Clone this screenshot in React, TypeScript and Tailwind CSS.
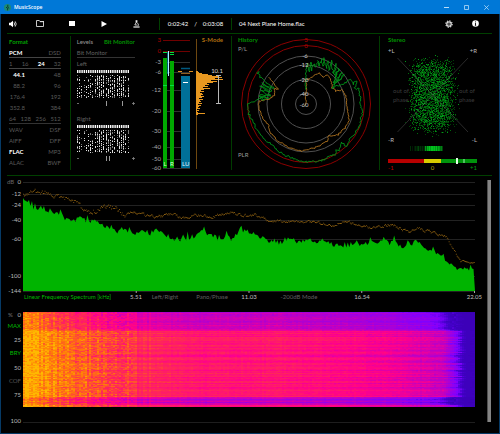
import React from 'react';

type Point = [number, number];

// small seeded generator so every render draws the same signal
const createRandom = (seed: number) => () => {
  seed = (seed * 1664525 + 1013904223) % 4294967296;
  return seed / 4294967296;
};

const valueAt = (points: Point[], x: number) => {
  for (let i = 1; i < points.length; i++) {
    const [x0, y0] = points[i - 1];
    const [x1, y1] = points[i];
    if (x <= x1) return y0 + ((y1 - y0) * (x - x0)) / (x1 - x0);
  }
  return points[points.length - 1][1];
};

const roughLine = (points: Point[], noise: number, seed: number) => {
  const random = createRandom(seed);
  const out: string[] = [];
  for (let i = 1; i < points.length; i++) {
    const [x0, y0] = points[i - 1];
    const [x1, y1] = points[i];
    const steps = Math.max(1, Math.round(Math.hypot(x1 - x0, y1 - y0) / 1.6));
    for (let s = 0; s < steps; s++) {
      const t = s / steps;
      out.push(`${(x0 + (x1 - x0) * t + (random() - 0.5) * noise).toFixed(1)},${(y0 + (y1 - y0) * t + (random() - 0.5) * noise).toFixed(1)}`);
    }
  }
  return out.join(' ');
};

/* ---------- Toolbar ---------- */

const Toolbar = () => (
  <div className="flex h-[19px] items-center pr-[7px] pl-2 text-white">
    <button aria-label="Volume" className="w-[15px]">
      <svg viewBox="0 0 8 8" className="h-2 w-2">
        <path d="M0 2.8h1.6L4 .8v6.4L1.6 5.2H0z" fill="currentColor" />
        <path d="M5 2.4q1.2 1.6 0 3.2M6.2 1.4q2 2.6 0 5.2" fill="none" stroke="currentColor" strokeWidth=".8" />
      </svg>
    </button>
    <button aria-label="Open file" className="flex w-8 justify-center">
      <svg viewBox="0 0 8 7" className="h-[7px] w-2">
        <path d="M.5 6.5v-6h2.8l.8 1.2h3.4v4.8z" fill="none" stroke="#ddd" strokeWidth=".9" />
        <path d="M4 1.5h4" stroke="#ddd" />
      </svg>
    </button>
    <button aria-label="Stop" className="flex w-8 justify-center">
      <span className="h-[5px] w-[6px] bg-white" />
    </button>
    <button aria-label="Play" className="flex w-8 justify-center">
      <svg viewBox="0 0 6 6" className="h-1.5 w-1.5">
        <path d="M.5 0 6 3 .5 6z" fill="currentColor" />
      </svg>
    </button>
    <button aria-label="Analyse" className="flex w-8 justify-center">
      <svg viewBox="0 0 7 8" className="h-2 w-[7px]">
        <path d="M2.6.2h1.8v2.6H2.6z" fill="#eee" />
        <path d="M3 2.8 1.8 5h2.6M4.4 3q1.8 1 .6 3" fill="none" stroke="#ddd" strokeWidth=".9" />
        <path d="M.4 6.4h6.2v1.2H.4z" fill="#eee" />
      </svg>
    </button>
    <div className="ml-[7px] h-3 w-px bg-[#004000]" />
    <div className="flex w-[71px] justify-center gap-1.5">
      <span>0:02:42</span>
      <span>/</span>
      <span>0:03:08</span>
    </div>
    <div className="h-3 w-px bg-[#004000]" />
    <span className="ml-[7px] flex-1">04 Next Plane Home.flac</span>
    <button aria-label="Settings" className="flex w-[26px] justify-center">
      <svg viewBox="0 0 8 8" className="h-2 w-2">
        <circle cx="4" cy="4" r="2.2" fill="none" stroke="#ddd" strokeWidth="1.3" />
        <circle cx="4" cy="4" r="3.2" fill="none" stroke="#ddd" strokeWidth="1.1" strokeDasharray="1.3 1.2" />
        <circle cx="4" cy="4" r=".7" fill="#ddd" />
      </svg>
    </button>
    <button aria-label="Info" className="mr-1 flex w-[26px] justify-center">
      <svg viewBox="0 0 8 8" className="h-[7px] w-[7px]">
        <circle cx="4" cy="4" r="3.8" fill="#fff" />
        <path d="M4 3.5V6M3.3 6h1.4M3.4 3.6H4M4 1.6v1" stroke="#000" strokeWidth="1" />
      </svg>
    </button>
  </div>
);

/* ---------- Format ---------- */

const formatRows = [
  { cells: ['PCM', 'DSD'], active: 'PCM', line: 'border-b border-[#444]' },
  { cells: ['1', '16', '24', '32'], active: '24', line: 'border-b border-[#444]' },
  { cells: ['44.1', '48'], active: '44.1', rate: true },
  { cells: ['88.2', '96'], rate: true },
  { cells: ['176.4', '192'], rate: true },
  { cells: ['352.8', '384'], rate: true },
  { cells: ['64', '128', '256', '512'], line: 'border-b border-[#333]' },
  { cells: ['WAV', 'DSF'] },
  { cells: ['AIFF', 'DFF'] },
  { cells: ['FLAC', 'MP3'], active: 'FLAC' },
  { cells: ['ALAC', 'BWF'] },
];

const FormatPanel = () => (
  <div className="pr-[9px] pl-0.5">
    <h2 className="h-[11px] font-bold text-[#00a000]">Format</h2>
    {formatRows.map((row) => (
      <div key={row.cells[0]} className={`flex h-[11px] justify-between text-[#5a5a5a] ${row.line ?? ''}`}>
        {row.cells.map((cell, i) => (
          <span
            key={cell}
            className={`${cell === row.active ? 'font-bold text-white' : ''} ${row.rate && i === 0 ? 'w-4 text-right' : ''}`}
          >
            {cell}
          </span>
        ))}
      </div>
    ))}
  </div>
);

/* ---------- Bit monitor ---------- */

const bitPaths = (seed: number) => {
  const random = createRandom(seed);
  let bright = '';
  let dim = '';
  for (let col = 0; col < 24; col++) {
    const x = Math.round(col * 2.2);
    for (let y = 5; y < 28; y += 1) {
      const density = col < 2 ? 0.45 : col < 8 ? 0.1 + (y / 28) * 0.35 : 0.62;
      if (random() < density) {
        if (random() < 0.6) bright += `M${x} ${y}h1v1h-1z`;
        else dim += `M${x} ${y}h1v1h-1z`;
      }
    }
  }
  return { bright, dim };
};

const BitChannel = ({ name, seed, ticks }: { name: string; seed: number; ticks: number[] }) => {
  const { bright, dim } = bitPaths(seed);
  return (
    <div className="h-[55px]">
      <div className="h-3 text-[#606060]">{name}</div>
      <svg viewBox="0 0 53 28" className="h-7 w-[53px]">
        {Array.from({ length: 24 }, (_, i) => (
          <rect key={i} x={i * 2.2} y="0" width="1.4" height="3" fill="#fff" />
        ))}
        <path d={bright} fill="#e0e0e0" />
        <path d={dim} fill="#787878" />
      </svg>
      <svg viewBox="0 0 58 10" className="h-2.5 w-[58px]">
        <path d="M0 5.5h2M55 5.5h3M56.5 4v3" stroke="#888" strokeWidth=".8" />
        {ticks.map((x) => (
          <path key={x} d={`M${x} 3v5`} stroke="#999" />
        ))}
      </svg>
    </div>
  );
};

const LevelsPanel = () => (
  <div className="w-[58px]">
    <div className="flex h-[11px] justify-between">
      <button className="font-medium text-[#909090]">Levels</button>
      <button className="font-bold text-[#009000]">Bit Monitor</button>
    </div>
    <div className="h-[11px] border-b border-[#333] text-[#606060]">Bit Monitor</div>
    <BitChannel name="Left" seed={7} ticks={[29.5, 45.5]} />
    <BitChannel name="Right" seed={23} ticks={[29.5, 32.5]} />
  </div>
);

/* ---------- Meters ---------- */

const meterScale: [string, number][] = [
  ['3', 6], ['0', 17], ['-3', 28], ['-6', 38], ['-12', 56], ['-20', 77], ['-30', 97], ['-40', 113], ['-50', 125], ['-60', 134],
];

const histogram = [
  2, 3, 6, 12, 16, 22, 26, 19, 27, 15, 21, 17, 11, 13, 9, 12, 7, 14, 8, 5, 8, 4, 6, 7, 5, 8, 6, 3, 7, 4, 5, 3, 6, 2, 5, 3, 2, 4, 1, 3, 1, 2, 9, 2,
];

const Meters = () => (
  <svg viewBox="0 0 86 141" className="h-[141px] w-[86px]">
    {meterScale.map(([label, y]) => (
      <g key={label}>
        <path d={`M18 ${y + 0.5}H45`} stroke={y < 20 ? '#700000' : '#303030'} />
        <text x="16" y={y + 2} textAnchor="end" fill={y < 20 ? '#b00000' : '#aaa'}>{label}</text>
      </g>
    ))}
    <rect x="18" y="24" width="4" height="110" fill="#00a800" />
    <rect x="25" y="27" width="4" height="107" fill="#00a800" />
    <path d="M18 18.5h4M25 18.5h4M25 20.5h4M18 51.5h4M25 51.5h4" stroke="#00e040" />
    <path d="M23.5 17v25" stroke="#b0f0ff" />
    <path d="M22.5 18v22" stroke="#0090c0" strokeWidth=".6" />
    <rect x="36" y="42" width="9" height="92" fill="#007098" />
    <path d="M36 34.5h9" stroke="#005a80" strokeWidth="1.5" />
    <path d="M33 37.5h4M44 37.5h4" stroke="#e09020" />
    <path d="M36 39.5h9" stroke="#906020" />
    <path d="M38 48.5h5" stroke="#fff" />
    <text x="18.5" y="132" fill="#d8ffd8">L</text>
    <text x="25" y="132" fill="#d8ffd8">R</text>
    <text x="37" y="132" fill="#e0f4ff">LU</text>
    <path d="M51.5 5v130" stroke="#6e4810" />
    <text x="78" y="8" textAnchor="end" fontWeight="700" fill="#b07010">S-Mode</text>
    {histogram.map((w, i) => (
      <rect key={i} x="51" y={37 + i} width={w} height="1" fill="#e89820" />
    ))}
    <text x="78" y="39" textAnchor="end" fill="#ddd">10.1</text>
    <path d="M73.5 41v28M71 41.5h5M71 69.5h5" stroke="#b8b8b8" fill="none" />
  </svg>
);

/* ---------- History ---------- */

const peakHistory: Point[] = [
  [74, 56], [74, 38], [75, 30], [77, 37], [79, 29], [80, 36], [82, 30], [84, 33], [86, 27], [87, 33], [89, 25], [91, 32], [92, 24], [94, 34],
  [96, 27], [97, 37], [99, 27], [102, 41], [104, 30], [103, 44], [107, 34], [102, 48], [110, 38], [101, 51], [112, 41], [100, 54], [111, 50],
  [119, 45], [121, 50], [124, 47], [123, 55], [127, 54], [127, 61], [129, 63], [128, 70], [130, 78], [129, 86], [127, 93], [122, 102],
  [118, 105], [114, 112], [109, 108], [107, 117], [104, 115], [103, 121], [96, 123], [88, 127], [74, 128], [60, 124], [50, 120], [42, 113],
  [34, 106], [27, 99], [21, 89], [17, 80], [15, 69], [23, 67], [26, 65], [32, 66], [28, 63], [37, 64], [27, 61], [39, 62], [28, 56], [38, 58],
  [28, 52], [40, 57], [30, 49], [42, 55], [28, 43], [25, 39], [28, 36],
];

const rangeHistory: Point[] = [
  [74, 71], [74, 46], [77, 45], [80, 43], [84, 41], [88, 39], [91, 43], [96, 41], [99, 45], [100, 54], [104, 57], [110, 56], [114, 62],
  [115, 70], [116, 78], [117, 87], [113, 94], [106, 101], [97, 102], [95, 107], [85, 113], [78, 115], [70, 117], [58, 114], [46, 107],
  [38, 98], [36, 90], [30, 83], [27, 74], [27, 67], [37, 65], [42, 61], [42, 55], [46, 55], [36, 42],
];

const HistoryChart = () => (
  <svg viewBox="0 0 145 141" className="h-[141px] w-[145px]">
    <g fill="none">
      <circle cx="74" cy="70" r="64.5" stroke="#8c0000" />
      <circle cx="74" cy="70" r="58.5" stroke="#8c0000" />
      {[48, 39, 24.5, 10.5].map((r) => (
        <circle key={r} cx="74" cy="70" r={r} stroke="#505050" />
      ))}
      <polyline points={roughLine(rangeHistory, 1.4, 5)} stroke="#b07420" strokeWidth=".9" />
      <polyline points={roughLine(peakHistory, 2, 11)} stroke="#009418" strokeWidth=".9" />
    </g>
    <g textAnchor="middle">
      <text x="74" y="8" fill="#b00000">3</text>
      <text x="74" y="14" fill="#b00000">0</text>
      <g fill="#c8c8c8">
        <text x="73" y="24">-6</text>
        <text x="72" y="33">-12</text>
        <text x="72" y="48">-20</text>
        <text x="72" y="62">-40</text>
        <text x="72" y="73">-60</text>
      </g>
    </g>
    <text x="6" y="8" fontWeight="700" fill="#009000">History</text>
    <text x="6" y="17" fill="#999">P/L</text>
    <text x="6" y="123" fill="#999">PLR</text>
  </svg>
);

/* ---------- Stereo ---------- */

const stereoDots = () => {
  const random = createRandom(99);
  const scatter = () => random() + random() + random() - 1.5;
  const paths = ['', '', ''];
  for (let i = 0; i < 3100; i++) {
    const x = 52.5 + (random() - 0.5) * 34 + scatter() * 9;
    const y = 61.5 + (random() - 0.5) * 61 + scatter() * 10;
    const level = random();
    paths[level < 0.6 ? 0 : level < 0.92 ? 1 : 2] += `M${Math.round(x)} ${Math.round(y)}h1v1h-1z`;
  }
  return paths;
};

const correlationBars = [2, 0, 1, 0, 1, 2, 1, 2, 3, 1, 2, 1, 2, 1, 2, 7, 4, 8, 7, 9, 7, 9, 9, 8, 9, 7, 9, 6, 8, 7, 5, 6, 3];

const StereoPanel = () => {
  const [low, mid, high] = stereoDots();
  return (
    <svg viewBox="0 0 112 141" className="h-[141px] w-28">
      <text x="8" y="8" fontWeight="700" fill="#009000">Stereo</text>
      <path d={low} fill="#004007" />
      <path d={mid} fill="#006a0c" />
      <path d={high} fill="#009c18" />
      <path d="M17.5 24 88 98M88 24 17.5 98" stroke="#888" strokeOpacity=".35" strokeWidth=".9" />
      <g fill="#bbb">
        <text x="8" y="19">+L</text>
        <text x="97" y="19" textAnchor="end">+R</text>
        <text x="8" y="108">-R</text>
        <text x="97" y="108" textAnchor="end">-L</text>
      </g>
      <g fill="#3c3c3c">
        <text x="13" y="59">out of</text>
        <text x="13" y="68">phase</text>
        <text x="79" y="59">out of</text>
        <text x="79" y="68">phase</text>
      </g>
      {correlationBars.map((v, i) => (
        <rect key={i} x={30 + i} y="112" width="1" height="5" fill="#00d820" opacity={v / 10} />
      ))}
      <rect x="8" y="125" width="36" height="4" fill="#b80000" />
      <rect x="44" y="125" width="17" height="4" fill="#d8cc00" />
      <rect x="61" y="125" width="36" height="4" fill="#00940c" />
      <rect x="76" y="124" width="2" height="6" fill="#e8ffe8" />
      <rect x="83" y="125" width="2" height="4" fill="#50c060" />
      <text x="8" y="136" fill="#c00000">-1</text>
      <text x="52.5" y="136" textAnchor="middle" fill="#b8ac00">0</text>
      <text x="97" y="136" textAnchor="end" fill="#009c10">+1</text>
    </svg>
  );
};

/* ---------- Spectrum ---------- */

const spectrumShape: Point[] = [
  [0, 17], [3, 20], [7, 22], [13, 26], [17, 24], [22, 28], [27, 27], [32, 30], [37, 33], [42, 36], [47, 38], [55, 37], [58, 31], [62, 38],
  [74, 39], [81, 42], [87, 46], [94, 49], [99, 44], [103, 49], [112, 50], [120, 49], [127, 51], [134, 47], [140, 50], [147, 55], [154, 57],
  [162, 56], [173, 54], [177, 48], [185, 51], [190, 52], [197, 57], [204, 54], [209, 56], [220, 47], [227, 49], [232, 51], [237, 56], [242, 55],
  [247, 58], [254, 61], [262, 59], [268, 54], [274, 59], [282, 57], [292, 60], [302, 59], [312, 62], [327, 63], [334, 61], [342, 61], [349, 58],
  [355, 60], [361, 55], [367, 61], [370, 57], [377, 63], [382, 64], [389, 62], [395, 57], [402, 65], [412, 69], [422, 75], [427, 79], [434, 86],
  [440, 86], [445, 87], [453, 84],
];

const peakShape: Point[] = [
  [0, 13], [10, 10], [20, 11], [30, 13], [39, 18], [49, 16], [57, 25], [64, 29], [77, 27], [92, 25], [102, 33], [110, 29], [120, 33],
  [137, 34], [147, 32], [164, 36], [177, 32], [190, 34], [207, 30], [227, 34], [232, 33], [247, 38], [260, 39], [290, 39], [307, 43],
  [325, 39], [342, 45], [354, 45], [367, 42], [387, 49], [397, 46], [410, 51], [424, 54], [432, 68], [438, 79], [453, 80],
];

const spectrumPath = () => {
  const random = createRandom(42);
  let d = 'M0 109';
  for (let x = 0; x < 453; x += 1.5) {
    const spike = random();
    const up = spike > 0.8 ? 6 * random() : 0;
    const y = valueAt(spectrumShape, x) + (random() - 0.5) * 4.5 + 1 - up;
    d += `L${x} ${y.toFixed(1)}`;
  }
  return `${d}L453 109Z`;
};

const peakDots = () => {
  const random = createRandom(17);
  let d = '';
  let drift = 0;
  for (let x = 0; x < 452; x += 0.9) {
    const noise = x < 100 ? 5 : x > 435 ? 1.5 : 2.5;
    drift = drift * 0.6 + (random() - 0.5) * noise;
    const y = valueAt(peakShape, x) + drift;
    d += `M${x.toFixed(1)} ${y.toFixed(1)}h.9v.9h-.9z`;
  }
  return d;
};

const spectrumScale: [string, number][] = [
  ['0', 0], ['-12', 12], ['-24', 23], ['-40', 38], ['-60', 57], ['-100', 94], ['-144', 109],
];

const Spectrum = () => (
  <section className="mt-1">
    <div className="flex">
      <svg viewBox="0 0 16 112" className="h-[112px] w-4 shrink-0 overflow-visible">
        <text x="0" y="4" fill="#666">dB</text>
        {spectrumScale.map(([label, y]) => (
          <text key={label} x="14" y={y + 4} textAnchor="end" fill="#bbb">{label}</text>
        ))}
      </svg>
      <svg viewBox="0 0 453 112" preserveAspectRatio="none" className="h-[112px] w-full min-w-0 flex-1 overflow-visible">
        <g transform="translate(0 2)">
          {spectrumScale.map(([label, y]) => (
            <path key={label} d={`M0 ${y + 0.5}H453`} stroke="#222" />
          ))}
          <path d={peakDots()} fill="#8a5e10" />
          <path d={spectrumPath()} fill="#00b400" />
          <path d="M113.5 109v2M226.5 109v2M339.5 109v2M452.5 109v2" stroke="#aaa" />
        </g>
      </svg>
    </div>
    <div className="grid h-[15px] grid-cols-[106fr_12fr_46fr_48fr_26fr_74fr_52fr_87fr] items-start pt-px pl-[17px] leading-[7px] text-[#c0c0c0]">
      <button className="text-left whitespace-nowrap text-[#00b800]">Linear Frequency Spectrum [kHz]</button>
      <span className="text-center">5.51</span>
      <button className="text-center text-[#606060]">Left/Right</button>
      <button className="text-center text-[#606060]">Pano/Phase</button>
      <span className="text-center">11.03</span>
      <button className="text-center whitespace-nowrap text-[#606060]">-200dB Mode</button>
      <span className="text-center">16.54</span>
      <span className="-mr-[7px] text-right">22.05</span>
    </div>
  </section>
);

/* ---------- Spectrogram ---------- */

const heatStops: [number, number, number, number][] = [
  [0, 58, 0, 180],
  [0.15, 70, 0, 205],
  [0.28, 128, 0, 255],
  [0.42, 180, 0, 205],
  [0.58, 255, 0, 140],
  [0.72, 255, 45, 80],
  [0.86, 255, 120, 10],
  [1, 255, 185, 0],
];

const heatColor = (v: number) => {
  let i = 1;
  while (i < heatStops.length - 1 && v > heatStops[i][0]) i++;
  const a = heatStops[i - 1];
  const b = heatStops[i];
  const t = Math.min(1, Math.max(0, (v - a[0]) / (b[0] - a[0])));
  return `rgb(${[1, 2, 3].map((c) => Math.round(a[c] + (b[c] - a[c]) * t)).join(',')})`;
};

const loudness: Point[] = [
  [0, 0.98], [20, 0.92], [45, 0.84], [80, 0.77], [120, 0.7], [180, 0.64], [260, 0.64], [330, 0.59], [380, 0.54], [420, 0.46], [428, 0.36],
  [436, 0.24], [442, 0.06], [453, 0.03],
];

const heatCells = () => {
  const random = createRandom(2024);
  const levels = 40;
  const paths: string[] = Array(levels).fill('');
  const columns = Array.from({ length: 227 }, () => (random() - 0.5) * 0.06);
  const rowNoise = Array.from({ length: 95 }, () => (random() - 0.5) * 0.1);
  for (let row = 0; row < 95; row++) {
    let shift = rowNoise[row];
    let edge = Math.round(random() * 5) - 2;
    if (row < 18) {
      shift -= 0.16;
      edge += 6;
    }
    if (row === 18 || row === 43 || row === 44) shift -= 0.1;
    if (row >= 85 && row < 93) {
      shift -= row % 3 === 0 ? 0.28 : 0.15;
      edge += 6;
    }
    if (row === 0) shift -= 0.1;
    for (let col = 0; col < 227; col++) {
      const x = col * 2;
      const base = valueAt(loudness, Math.min(453, x + edge));
      const grain = x < 110 ? 0.14 : 0.04;
      const fade = base < 0.2 ? 0.08 : 1;
      const stripe = x < 130 ? 1.5 : 0.4;
      const weight = Math.min(1, 0.4 + x / 200);
      const v = base + (shift * weight + columns[col] * stripe + (random() - 0.5) * grain) * fade;
      const level = Math.max(0, Math.min(levels - 1, Math.round(v * (levels - 1))));
      paths[level] += `M${x} ${row}h2v1h-2z`;
    }
  }
  return paths.map((d, i) => ({ d, fill: heatColor(i / (levels - 1)) }));
};

const percentScale: [string, number][] = [['0', 3], ['25', 28], ['50', 56], ['75', 83], ['100', 109]];

const Spectrogram = () => (
  <section className="mt-[5px] flex">
    <svg viewBox="0 0 16 114" className="h-[114px] w-4 shrink-0 overflow-visible">
      <text x="1" y="5" fill="#777">%</text>
      {percentScale.map(([label, y]) => (
        <text key={label} x="14" y={y + 2} textAnchor="end" fill="#bbb">{label}</text>
      ))}
      <text x="14" y="16" textAnchor="end" fill="#00b800">MAX</text>
      <text x="14" y="43" textAnchor="end" fill="#00b800">BRY</text>
      <text x="14" y="71" textAnchor="end" fill="#555">COF</text>
    </svg>
    <svg viewBox="0 0 453 114" preserveAspectRatio="none" shapeRendering="crispEdges" className="h-[114px] w-full min-w-0 flex-1">
      {heatCells().map(({ d, fill }) => (
        <path key={fill} d={d} fill={fill} />
      ))}
      <path d="M0 110.5h453" stroke="#1e1e1e" />
    </svg>
  </section>
);

/* ---------- Window ---------- */

const App = () => (
  <div className="flex min-h-screen w-full flex-col border border-t-0 border-[#063a66] bg-black font-[Lato,'Liberation_Sans',sans-serif] text-[6px] leading-[11px]">
    <header className="-mx-px flex h-[14px] items-center bg-[#0078d7] px-1 text-white">
      <svg viewBox="0 0 7 7" className="h-[7px] w-[7px]">
        <circle cx="3.5" cy="3.5" r="3.5" fill="#1d8a74" />
        <path d="M3.8.8v2.4M2 3.2l1.6 1v2.2M3.8 3.2l1.4 1.2" stroke="#06382e" strokeWidth=".9" fill="none" />
      </svg>
      <h1 className="ml-[3px] flex-1 font-['Open_Sans',sans-serif] text-[5px] font-semibold">MusicScope</h1>
      <div className="flex text-[#b8dcf8]">
        <button aria-label="Minimize" className="flex w-5 justify-center">
          <svg viewBox="0 0 5 5" className="h-[5px] w-[5px]"><path d="M0 2.5h5" stroke="currentColor" /></svg>
        </button>
        <button aria-label="Maximize" className="flex w-5 justify-center">
          <svg viewBox="0 0 5 5" className="h-[5px] w-[5px]"><path d="M.5.5h4v4h-4z" fill="none" stroke="currentColor" strokeWidth=".8" /></svg>
        </button>
        <button aria-label="Close" className="flex w-5 justify-center">
          <svg viewBox="0 0 5 5" className="h-[5px] w-[5px]"><path d="m.3.3 4.4 4.4M4.7.3.3 4.7" stroke="currentColor" strokeWidth=".8" /></svg>
        </button>
      </div>
    </header>

    <Toolbar />

    <main className="mr-[7px] ml-1.5 flex-1">
      <div className="grid h-[142px] grid-cols-[64fr_162fr_148fr_112fr] border-t border-[#004000]">
        <div className="mt-[2px] mb-[5px] border-r border-[#003c00]">
          <FormatPanel />
        </div>
        <div className="mt-[2px] mb-[5px] flex justify-between border-r border-[#003c00] pl-[6px]">
          <LevelsPanel />
          <div className="-mt-[2px] h-[134px]">
            <Meters />
          </div>
        </div>
        <div className="mt-[2px] mb-[5px] border-r border-[#003c00]">
          <div className="-mt-[2px] h-[134px]">
            <HistoryChart />
          </div>
        </div>
        <StereoPanel />
      </div>

      <div className="flex border-t border-[#004000]">
        <div className="min-w-0 flex-1">
          <Spectrum />
          <Spectrogram />
        </div>
        <div className="mt-1 mr-px mb-1 ml-3 w-1 border-l border-[#505050] bg-[#848484]" />
      </div>
    </main>
  </div>
);

export default App;
